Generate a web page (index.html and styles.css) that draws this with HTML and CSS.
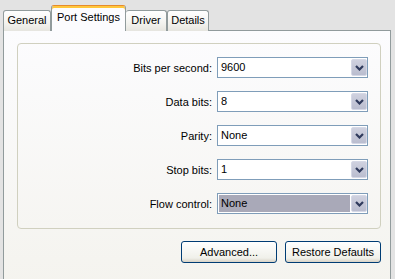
FILE: index.html
```html
<html>

<head>
    <title>Port Settings</title>
    <link rel="stylesheet" href="styles.css">
</head>

<body>

    <div class="tabs">
        <span class="tab tab-general">General</span>
        <span class="tab tab-port active">Port Settings</span>
        <span class="tab tab-driver">Driver</span>
        <span class="tab tab-details">Details</span>
    </div>

    <div class="page">
        <div class="group">
            <div class="row">
                <label>Bits per second:</label>
                <div class="select"><span class="value">9600</span><span class="arrow"><svg width="9" height="6" viewBox="0 0 9 6"><path d="M1 1 L4.5 4.5 L8 1" fill="none" stroke="#2f3a5c" stroke-width="2.2"/></svg></span></div>
            </div>
            <div class="row">
                <label>Data bits:</label>
                <div class="select"><span class="value">8</span><span class="arrow"><svg width="9" height="6" viewBox="0 0 9 6"><path d="M1 1 L4.5 4.5 L8 1" fill="none" stroke="#2f3a5c" stroke-width="2.2"/></svg></span></div>
            </div>
            <div class="row">
                <label>Parity:</label>
                <div class="select"><span class="value">None</span><span class="arrow"><svg width="9" height="6" viewBox="0 0 9 6"><path d="M1 1 L4.5 4.5 L8 1" fill="none" stroke="#2f3a5c" stroke-width="2.2"/></svg></span></div>
            </div>
            <div class="row">
                <label>Stop bits:</label>
                <div class="select"><span class="value">1</span><span class="arrow"><svg width="9" height="6" viewBox="0 0 9 6"><path d="M1 1 L4.5 4.5 L8 1" fill="none" stroke="#2f3a5c" stroke-width="2.2"/></svg></span></div>
            </div>
            <div class="row">
                <label>Flow control:</label>
                <div class="select focused"><span class="value">None</span><span class="arrow"><svg width="9" height="6" viewBox="0 0 9 6"><path d="M1 1 L4.5 4.5 L8 1" fill="none" stroke="#2f3a5c" stroke-width="2.2"/></svg></span></div>
            </div>
        </div>

        <div class="buttons">
            <button class="btn">Advanced...</button>
            <button class="btn">Restore Defaults</button>
        </div>
    </div>

</body>

</html>
```

FILE: styles.css
```css
body {
    margin: 0;
    overflow: hidden;
    background-color: #e3e3e3;
    font-family: 'Liberation Sans', Arial, sans-serif;
    font-size: 11px;
    color: #000;
}

.tabs {
    display: flex;
    align-items: flex-end;
    height: 24px;
    padding: 6px 0 0 3px;
}

.tab {
    box-sizing: border-box;
    height: 21px;
    margin-bottom: -1px;
    padding-top: 3px;
    text-align: center;
    border: 1px solid #919b9c;
    border-bottom: none;
    border-radius: 3px 3px 0 0;
    background: linear-gradient(#ffffff, #f3f3ef 60%, #e6e5df);
}

.tab-general {
    width: 48px;
}

.tab-port {
    width: 75px;
}

.tab-driver {
    width: 41px;
    border-left: none;
}

.tab-details {
    width: 42px;
}

.tab.active {
    position: relative;
    z-index: 1;
    height: 26px;
    padding-top: 5px;
    margin-bottom: -1px;
    border-top: 1px solid #e68b2c;
    box-shadow: inset 0 2px 0 #ffc73c;
    background: #fcfcfe;
}

.page {
    box-sizing: border-box;
    width: 388px;
    height: 262px;
    margin-left: 3px;
    border: 1px solid #919b9c;
    background: linear-gradient(#fcfcfe, #f4f3ee);
}

.group {
    box-sizing: border-box;
    height: 186px;
    margin: 12px 9px 0 13px;
    padding: 13px 12px 0 0;
    border: 1px solid #d0d0bf;
    border-radius: 4px;
}

.row {
    display: flex;
    align-items: center;
    justify-content: flex-end;
    height: 21px;
    margin-bottom: 13px;
}

.row label {
    margin-right: 5px;
}

.select {
    box-sizing: border-box;
    display: flex;
    width: 151px;
    height: 21px;
    border: 1px solid #7f9db9;
    background-color: #fff;
}

.value {
    flex: 1;
    margin: 1px;
    padding-left: 2px;
    line-height: 17px;
}

.focused .value {
    background-color: #a9a9b8;
}

.arrow {
    box-sizing: border-box;
    display: flex;
    align-items: center;
    justify-content: center;
    width: 16px;
    height: 17px;
    margin: 1px 0;
    border: 1px solid #d5d8e6;
    border-radius: 2px;
    background: linear-gradient(#cfd1df, #babdcf);
}

.buttons {
    display: flex;
    justify-content: flex-end;
    gap: 8px;
    margin: 12px 9px 0 0;
}

.btn {
    box-sizing: border-box;
    width: 96px;
    height: 22px;
    padding: 0;
    font-family: inherit;
    font-size: 11px;
    color: #000;
    border: 1px solid #003c74;
    border-radius: 3px;
    background: linear-gradient(#ffffff, #f0f0ea 80%, #d8d2c6);
}
```
